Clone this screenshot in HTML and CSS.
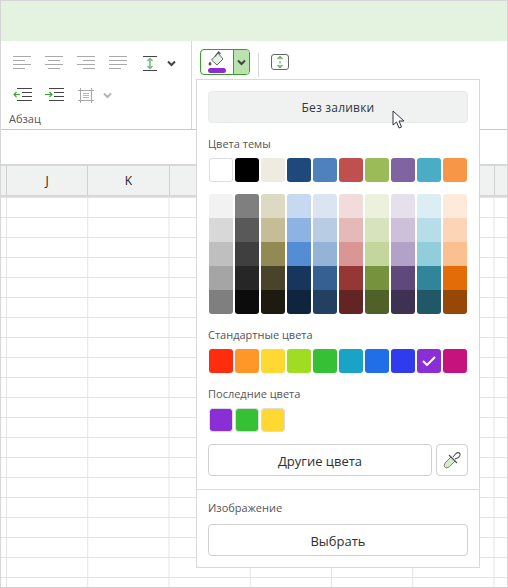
FILE: index.html
```html
<!DOCTYPE html>
<html lang="ru">
<head>
<meta charset="utf-8">
<title>Заливка</title>
<link rel="stylesheet" href="styles.css">
</head>
<body>
<div class="window">
  <div class="titlebar"></div>
  <div class="ribbon">
    <div class="group para">
      <div class="tools">
        <span class="tool"><svg width="18" height="14" viewBox="0 0 18 14"><path d="M0 .5h18M0 4.500h12M0 8.500h18M0 12.500h12" class="line"/></svg></span>
        <span class="tool"><svg width="18" height="14" viewBox="0 0 18 14"><path d="M0 .5h18M3 4.500h12M0 8.500h18M3 12.500h12" class="line"/></svg></span>
        <span class="tool"><svg width="18" height="14" viewBox="0 0 18 14"><path d="M0 .5h18M6 4.500h12M0 8.500h18M6 12.500h12" class="line"/></svg></span>
        <span class="tool"><svg width="18" height="14" viewBox="0 0 18 14"><path d="M0 .5h18M0 4.500h18M0 8.500h18M0 12.500h12" class="line"/></svg></span>
        <span class="tool"><svg width="14" height="15" viewBox="0 0 14 15"><path d="M0 .5h14M0 14.500h14" stroke="#444" fill="none"/><path d="M7 3v9" stroke="#8ccb93" stroke-width="2" fill="none"/><path d="M4.500 5 7 2.500 9.500 5M4.500 10 7 12.500 9.500 10" stroke="#6db877" stroke-width="1.300" fill="none"/></svg></span>
        <svg class="chev" width="9" height="7" viewBox="0 0 9 7"><path d="M1 1.500 4.500 5 8 1.500" stroke="#444" stroke-width="2" fill="none"/></svg>
      </div>
      <div class="tools">
        <span class="tool"><svg width="19" height="14" viewBox="0 0 19 14"><path d="M4 .5h15M9 4.500h10M9 8.500h10M4 12.500h15" stroke="#444" fill="none"/><path d="M7 6.500H1M3.500 4 1 6.500 3.500 9" stroke="#3aa535" stroke-width="1.100" fill="none"/></svg></span>
        <span class="tool"><svg width="19" height="14" viewBox="0 0 19 14"><path d="M4 .5h15M9 4.500h10M9 8.500h10M4 12.500h15" stroke="#444" fill="none"/><path d="M0 6.500h7M4.500 4 7 6.500 4.500 9" stroke="#3aa535" stroke-width="1.100" fill="none"/></svg></span>
        <span class="tool"><svg width="16" height="15" viewBox="0 0 16 15"><path d="M0 2.500h16M0 12.500h16M2.500 0v15M13.500 0v15" stroke="#a8a8a8" fill="none"/><path d="M5 5.500h6M5 7.500h6M5 9.500h6" stroke="#b8b8b8" fill="none"/></svg></span>
        <svg class="chev" width="9" height="7" viewBox="0 0 9 7"><path d="M1 1.500 4.500 5 8 1.500" stroke="#b4b4b4" stroke-width="2" fill="none"/></svg>
      </div>
      <div class="group-label">Абзац</div>
    </div>
    <div class="group fill-group">
      <div class="fill-split">
        <span class="fill-main">
          <svg width="20" height="16" viewBox="0 0 20 16"><path d="M11 2 16 8 10 14 4.500 9z" fill="#e3f3de" stroke="#666" stroke-width="1"/><path d="M8 5.500 11.500 1l2 2" stroke="#555" stroke-width="1.200" fill="none"/><path d="M3 10.500c-1 1.300-1.500 2-1.500 2.500a1.500 1.500 0 0 0 3 0c0-.5-.5-1.200-1.500-2.500z" fill="#555"/></svg>
          <span class="fill-bar"></span>
        </span>
        <span class="fill-arrow"><svg width="9" height="7" viewBox="0 0 9 7"><path d="M1 1.500 4.500 5 8 1.500" stroke="#444" stroke-width="2" fill="none"/></svg></span>
      </div>
      <span class="ribbon-sep"></span>
      <span class="fit-btn"><svg width="8" height="12" viewBox="0 0 8 12"><path d="M4 1v10" stroke="#7cc283" stroke-width="1.500" stroke-dasharray="2.500 1.500"/><path d="M1.500 3 4 .5 6.500 3M1.500 9 4 11.500 6.500 9" stroke="#5fb368" stroke-width="1.300" fill="none"/></svg></span>
    </div>
  </div>
  <div class="formula"></div>
  <div class="col-head">
    <span class="corner"></span>
    <span class="col">J</span>
    <span class="col">K</span>
    <span class="col"></span>
    <span class="col"></span>
    <span class="col"></span>
    <span class="col"></span>
  </div>
  <div class="cells"></div>

  <div class="popup">
    <div class="popup-top">
      <button class="btn btn-none">Без заливки</button>
      <div class="label label-theme">Цвета темы</div>
      <div class="row">
        <span class="sw sw-white"></span>
        <span class="sw" style="background:#000"></span>
        <span class="sw" style="background:#eeece1"></span>
        <span class="sw" style="background:#1f497d"></span>
        <span class="sw" style="background:#4f81bd"></span>
        <span class="sw" style="background:#c0504d"></span>
        <span class="sw" style="background:#9bbb59"></span>
        <span class="sw" style="background:#8064a2"></span>
        <span class="sw" style="background:#4bacc6"></span>
        <span class="sw" style="background:#f79646"></span>
      </div>
      <div class="row tints">
        <div class="tint-col"><i style="background:#f2f2f2"></i><i style="background:#d8d8d8"></i><i style="background:#bfbfbf"></i><i style="background:#a5a5a5"></i><i style="background:#7f7f7f"></i></div>
        <div class="tint-col"><i style="background:#7f7f7f"></i><i style="background:#595959"></i><i style="background:#3f3f3f"></i><i style="background:#262626"></i><i style="background:#0c0c0c"></i></div>
        <div class="tint-col"><i style="background:#ddd9c3"></i><i style="background:#c4bd97"></i><i style="background:#938953"></i><i style="background:#494429"></i><i style="background:#1d1b10"></i></div>
        <div class="tint-col"><i style="background:#c6d9f0"></i><i style="background:#8db3e2"></i><i style="background:#548dd4"></i><i style="background:#17365d"></i><i style="background:#0f243e"></i></div>
        <div class="tint-col"><i style="background:#dbe5f1"></i><i style="background:#b8cce4"></i><i style="background:#95b3d7"></i><i style="background:#366092"></i><i style="background:#244061"></i></div>
        <div class="tint-col"><i style="background:#f2dcdb"></i><i style="background:#e5b9b7"></i><i style="background:#d99694"></i><i style="background:#953734"></i><i style="background:#632423"></i></div>
        <div class="tint-col"><i style="background:#ebf1dd"></i><i style="background:#d7e3bc"></i><i style="background:#c3d69b"></i><i style="background:#76923c"></i><i style="background:#4f6128"></i></div>
        <div class="tint-col"><i style="background:#e5e0ec"></i><i style="background:#ccc1d9"></i><i style="background:#b2a2c7"></i><i style="background:#5f497a"></i><i style="background:#3f3151"></i></div>
        <div class="tint-col"><i style="background:#dbeef3"></i><i style="background:#b7dde8"></i><i style="background:#92cddc"></i><i style="background:#31859b"></i><i style="background:#205867"></i></div>
        <div class="tint-col"><i style="background:#fdeada"></i><i style="background:#fbd5b5"></i><i style="background:#fac08f"></i><i style="background:#e36c09"></i><i style="background:#974806"></i></div>
      </div>
      <div class="label label-std">Стандартные цвета</div>
      <div class="row">
        <span class="sw" style="background:#ff2d0d"></span>
        <span class="sw" style="background:#ff9728"></span>
        <span class="sw" style="background:#ffd932"></span>
        <span class="sw" style="background:#a0dc22"></span>
        <span class="sw" style="background:#36c035"></span>
        <span class="sw" style="background:#19a3c7"></span>
        <span class="sw" style="background:#206fe8"></span>
        <span class="sw" style="background:#2f3cee"></span>
        <span class="sw" style="background:#8a2fd6"><svg width="14" height="10" viewBox="0 0 14 10"><path d="M1 5l4 4 8-8" stroke="#fff" stroke-width="2" fill="none"/></svg></span>
        <span class="sw" style="background:#c5127d"></span>
      </div>
      <div class="label label-last">Последние цвета</div>
      <div class="row">
        <span class="sw sw-recent" style="background-color:#8a2fd6"></span>
        <span class="sw sw-recent" style="background-color:#36c035"></span>
        <span class="sw sw-recent" style="background-color:#ffd932"></span>
      </div>
      <div class="more-row">
        <button class="btn btn-outline btn-more">Другие цвета</button>
        <button class="btn btn-outline btn-eye"><svg width="18" height="18" viewBox="0 0 18 18"><path d="M2 12 8 6l4 4-6 6-3 1-2-2z" fill="#d4ecca" stroke="#777" stroke-width=".9"/><path d="M6 4l8 8" stroke="#555" stroke-width="1.200" fill="none"/><path d="M10 6l3-3.500c1.500-1.500 3.500-1 4 .5.500 1.500-.5 2.500-1.500 3.500L12 8" fill="#fff" stroke="#555" stroke-width="1.100"/></svg></button>
      </div>
    </div>
    <div class="popup-bottom">
      <div class="label label-img">Изображение</div>
      <button class="btn btn-outline btn-pick">Выбрать</button>
    </div>
  </div>

  <svg class="cursor" width="14" height="20" viewBox="0 0 14 20"><path d="M1 1v14l3.500-3 2.500 6 2.500-1-2.500-6h5z" fill="#fff" stroke="#2b3440" stroke-width="1"/></svg>
</div>
</body>
</html>
```

FILE: styles.css
```css
* { box-sizing: border-box; }
html, body { margin: 0; padding: 0; }
body { width: 508px; height: 588px; overflow: hidden; background: #fff; font-family: "Open Sans", "Noto Sans", sans-serif; }

.window { position: relative; width: 508px; height: 588px; border: 1px solid #d6d6d6; border-bottom-color: #d0d0d0; display: flex; flex-direction: column; overflow: hidden; background: #fff; }

.titlebar { height: 40px; flex: none; background: #e4f3df; }

.ribbon { height: 89px; flex: none; display: flex; border-bottom: 1px solid #c8c8c8; }
.group { height: 100%; }
.para { width: 191px; flex: none; border-right: 1px solid #d6d6d6; padding: 6px 0 0 5px; }
.tools { height: 32px; display: flex; align-items: center; }
.tool { width: 32px; height: 32px; display: flex; align-items: center; justify-content: center; }
.line { stroke: #a9a9a9; fill: none; }
.chev { margin-left: 1px; }
.group-label { font-size: 11px; line-height: 16px; color: #555; margin: 0 0 0 3px; }

.fill-group { flex: 1; display: flex; align-items: flex-start; padding: 8px 0 0 8px; }
.fill-split { width: 50px; height: 26px; display: flex; border: 1px solid #3d9a2e; border-radius: 4px; overflow: hidden; }
.fill-main { width: 33px; display: flex; flex-direction: column; align-items: center; padding-top: 1px; border-right: 1px solid #3d9a2e; }
.fill-bar { width: 18px; height: 5px; border-radius: 3px; background: #8a2fd6; margin-top: 1px; flex: none; }
.fill-main svg { flex: none; }
.fill-arrow { flex: 1; display: flex; align-items: center; justify-content: center; background: #b9e2ae; }
.ribbon-sep { width: 1px; height: 24px; background: #d6d6d6; margin: 4px 0 0 8px; }
.fit-btn { width: 18px; height: 16px; margin: 5px 0 0 12px; border: 1px solid #666; border-radius: 3px; display: flex; align-items: center; justify-content: center; }

.formula { height: 36px; flex: none; border-bottom: 2px solid #d8d8d8; }

.col-head { height: 31px; flex: none; display: flex; background: #f0f2f1; border-bottom: 2px solid #d8d8d8; }
.corner { width: 6px; flex: none; border-right: 1px solid #d0d0d0; }
.col { width: 81.25px; flex: none; border-right: 1px solid #d0d0d0; font-size: 12px; line-height: 29px; text-align: center; color: #222; }

.cells { flex: 1; background-color: #fff;
  background-image: linear-gradient(#e4e4e4 1px, transparent 1px), linear-gradient(90deg, #e4e4e4 1px, transparent 1px);
  background-size: 100% 20px, 81.25px 100%;
  background-position: 0 0, 5px 0; }

.popup { position: absolute; left: 195px; top: 78px; width: 284px; height: 489px; background: #fff; border: 1px solid #d8d8d8; display: flex; flex-direction: column; }
.popup-top { height: 410px; flex: none; padding: 11px 11px 0 11px; border-bottom: 1px solid #dedede; }
.popup-bottom { flex: 1; padding: 0 11px; }

.btn { display: block; font-family: inherit; font-size: 13px; color: #2b2f33; text-align: center; padding: 1px 0 0; cursor: default; border-radius: 4px; }
.btn-none { width: 260px; height: 32px; background: #f0f2f1; border: 1px solid #e9ebea; font-size: 12px; letter-spacing: .2px; color: #2f3640; }
.btn-outline { background: #fff; border: 1px solid #d0d0d0; height: 32px; }

.label { font-size: 11px; line-height: 16px; color: #555; }
.label-theme { margin-top: 13px; }
.label-std { margin-top: 13px; }
.label-last { margin-top: 13px; }
.label-img { margin-top: 10px; }

.row { display: flex; gap: 2px; padding-left: 1px; margin-top: 6px; }
.sw { width: 24px; height: 24px; border-radius: 3px; flex: none; display: flex; align-items: center; justify-content: center; }
.sw-white { background: #fff; box-shadow: inset 0 0 0 1px #dedede; }
.sw-recent { border: 1px solid #dcdcdc; background-clip: padding-box; }

.tints { margin-top: 12px; }
.tint-col { width: 24px; height: 120px; border-radius: 3px; overflow: hidden; display: flex; flex-direction: column; }
.tint-col i { display: block; height: 24px; flex: none; }

.more-row { display: flex; gap: 4px; margin-top: 12px; }
.btn-more { width: 224px; }
.btn-eye { width: 32px; display: flex; align-items: center; justify-content: center; padding: 0; }
.btn-pick { width: 260px; margin-top: 8px; }

.cursor { position: absolute; left: 391px; top: 109px; }
```
